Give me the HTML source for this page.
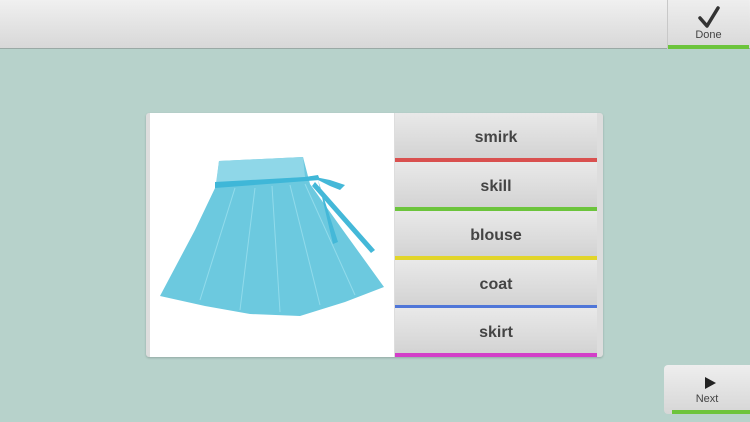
<!DOCTYPE html>
<html><head><style>
body{margin:0;width:750px;height:422px;overflow:hidden;background:#b7d2cb;font-family:"Liberation Sans","DejaVu Sans",sans-serif;position:relative}
.top{position:absolute;left:0;top:0;width:750px;height:48px;background:linear-gradient(#f0f0f0,#d8d8d8);border-bottom:1px solid #9aa9a5}
.done{position:absolute;left:667px;top:0;width:81px;height:49px;background:linear-gradient(#eee,#d8d8d8);border-left:1px solid #c8c8c8}
.done .g,.next .g{position:absolute;left:0;right:0;bottom:0;height:4px;background:#6cc43c}
.lbl{position:absolute;width:100%;text-align:center;font-size:11px;color:#444}
.card{position:absolute;left:146px;top:113px;width:457px;height:244px;background:#ddd;border-radius:3px;box-shadow:0 1px 2px rgba(0,0,0,.2)}
.img{position:absolute;left:4px;top:0;width:244px;height:244px;background:#fff}
.btn{position:absolute;left:249px;width:202px;height:49px;background:linear-gradient(#e9e9e9,#d3d3d3);text-align:center;font-weight:bold;font-size:16px;color:#444;line-height:50px;box-sizing:border-box}
.next{position:absolute;left:664px;top:365px;width:86px;height:49px;background:linear-gradient(#eee,#d6d6d6);border-radius:4px 0 0 4px}
</style></head><body>
<div class="top"></div>
<div class="done">
<svg style="position:absolute;left:29px;top:5px" width="24" height="24" viewBox="0 0 24 24"><path d="M3 13 L10 21 L21 3" fill="none" stroke="#333" stroke-width="3.5" stroke-linecap="round" stroke-linejoin="round"/></svg>
<div class="lbl" style="top:29px">Done</div><div class="g"></div></div>
<div class="card">
<div class="img"><svg width="244" height="244" viewBox="150 113 244 244">
<path d="M219 161 L303 157 L310 184 L345 233 L384 287 L345 302 L300 316 L250 314 L205 306 L160 296 L195 230 L216 186 Z" fill="#6cc9df"/>
<path d="M219 161 L303 157 L305 177 L216 183 Z" fill="#8fd7e8"/>
<path d="M215 182 L305 177 L318 175 L320 180 L215 188 Z" fill="#3fb7d8"/>
<path d="M310 176 L330 180 L345 185 L340 190 L330 186 Z M315 182 L375 250 L371 253 L312 186 Z M318 180 L338 242 L333 244 Z" fill="#44b8d8"/>
<g stroke="#9be0ee" stroke-width="1" opacity=".8"><line x1="235" y1="188" x2="200" y2="300"/><line x1="255" y1="188" x2="240" y2="310"/><line x1="272" y1="186" x2="280" y2="312"/><line x1="290" y1="185" x2="320" y2="305"/><line x1="305" y1="184" x2="355" y2="295"/></g>
</svg></div>
<div class="btn" style="top:0;border-bottom:4px solid #d9504f">smirk</div>
<div class="btn" style="top:49px;border-bottom:4px solid #6cc43c">skill</div>
<div class="btn" style="top:98px;border-bottom:4px solid #e2d52a">blouse</div>
<div class="btn" style="top:147px;border-bottom:4px solid #4f76d8">coat</div>
<div class="btn" style="top:195px;border-bottom:4px solid #d23fc8">skirt</div>
</div>
<div class="next">
<svg style="position:absolute;left:40px;top:11px" width="13" height="14"><path d="M1 1 L12 7 L1 13 Z" fill="#222"/></svg>
<div class="lbl" style="top:28px">Next</div><div class="g" style="left:8px"></div></div>
</body></html>
